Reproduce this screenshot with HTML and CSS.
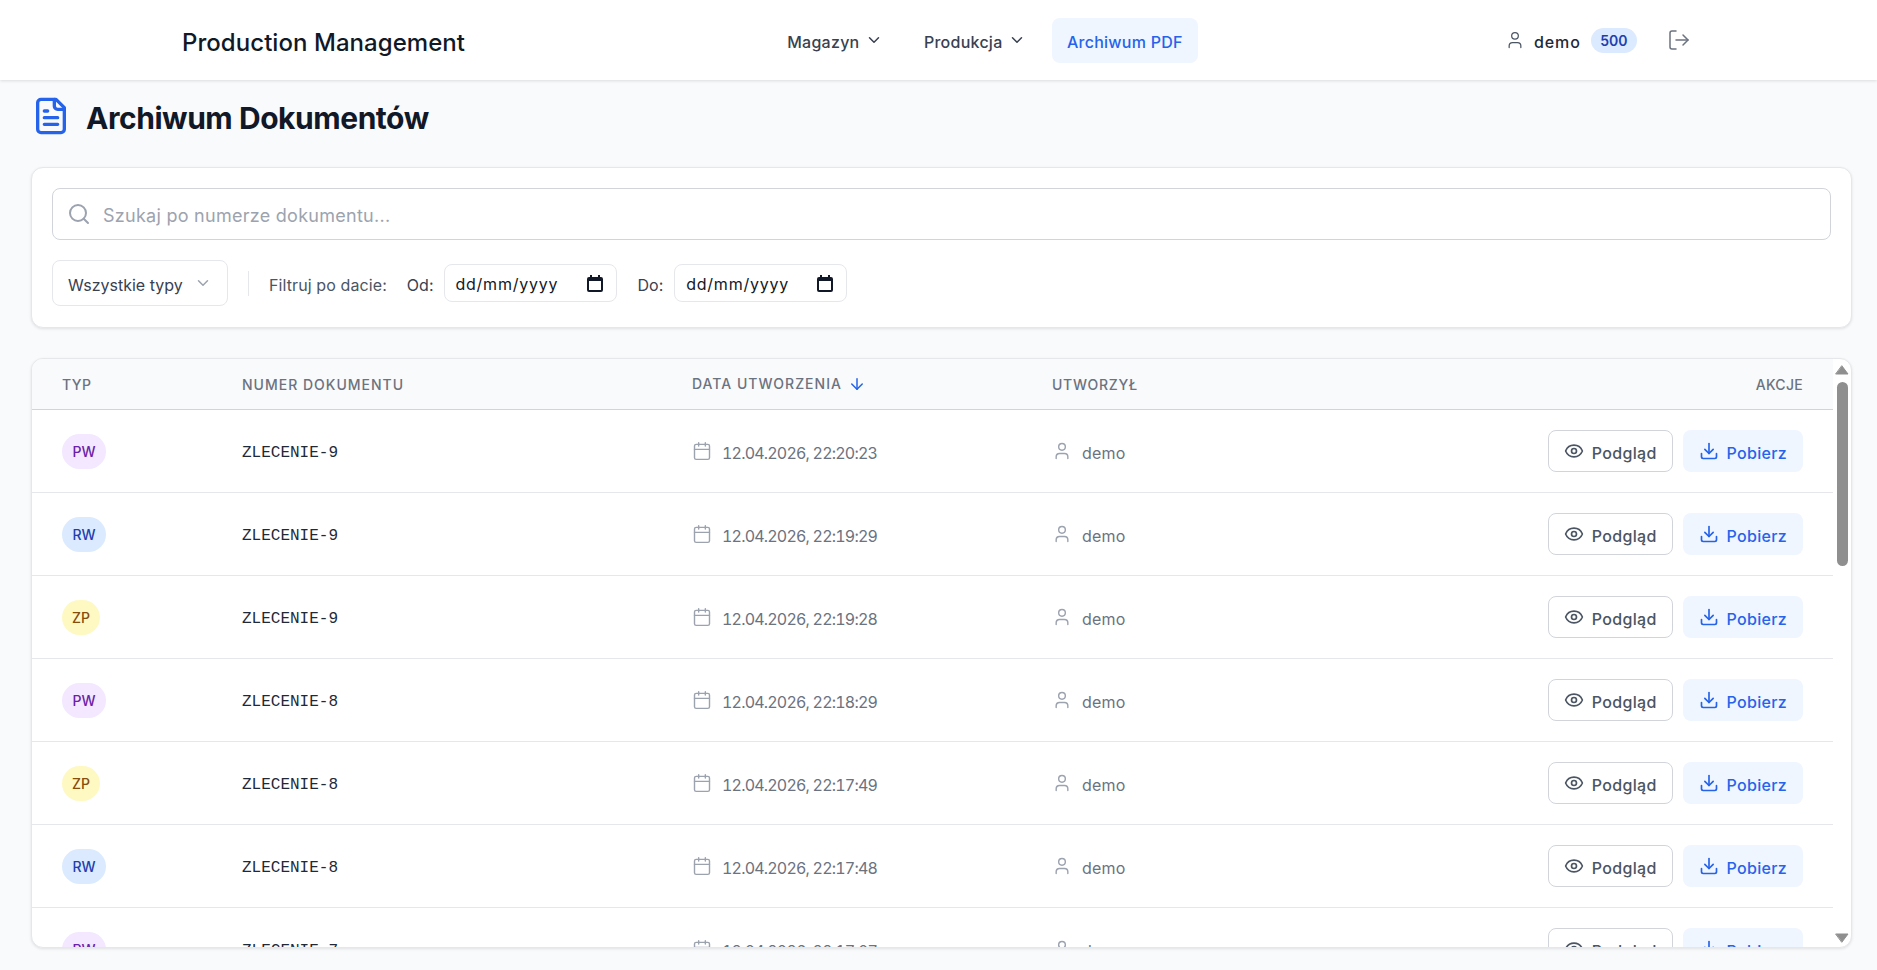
FILE: index.html
```html
<!DOCTYPE html>
<html lang="pl">
<head>
    <meta charset="UTF-8">
    <meta name="viewport" content="width=device-width, initial-scale=1.0">
    <title>Archiwum Dokumentów - Production Management</title>
    <link rel="stylesheet" href="styles.css">
</head>
<body>
    <!-- shared icons -->
    <svg class="icon-defs" xmlns="http://www.w3.org/2000/svg">
        <symbol id="i-chevron" viewBox="0 0 24 24"><path d="m6 9 6 6 6-6"/></symbol>
        <symbol id="i-user" viewBox="0 0 24 24"><path d="M19 21v-2a4 4 0 0 0-4-4H9a4 4 0 0 0-4 4v2"/><circle cx="12" cy="7" r="4"/></symbol>
        <symbol id="i-calendar" viewBox="0 0 24 24"><path d="M8 2v4M16 2v4"/><rect x="3" y="4" width="18" height="18" rx="2"/><path d="M3 10h18"/></symbol>
        <symbol id="i-eye" viewBox="0 0 24 24"><path d="M2.06 12.35a1 1 0 0 1 0-.7 10.75 10.75 0 0 1 19.88 0 1 1 0 0 1 0 .7 10.75 10.75 0 0 1-19.88 0"/><circle cx="12" cy="12" r="3"/></symbol>
        <symbol id="i-download" viewBox="0 0 24 24"><path d="M21 15v4a2 2 0 0 1-2 2H5a2 2 0 0 1-2-2v-4"/><path d="m7 10 5 5 5-5"/><path d="M12 15V3"/></symbol>
        <symbol id="i-picker" viewBox="0 0 16 17"><path class="picker-fill" d="M3 0h2v2h6V0h2v2h1a2 2 0 0 1 2 2v11a2 2 0 0 1-2 2H2a2 2 0 0 1-2-2V4a2 2 0 0 1 2-2h1Zm-1 6v9h12V6Z"/></symbol>
    </svg>

    <header class="topbar">
        <div class="brand"><span class="brand-text">Production Management</span></div>
        <nav class="nav">
            <a class="nav-item" href="#"><span class="txt">Magazyn</span> <svg class="icon-16"><use href="#i-chevron"/></svg></a>
            <a class="nav-item" href="#"><span class="txt">Produkcja</span> <svg class="icon-16"><use href="#i-chevron"/></svg></a>
            <a class="nav-item active" href="#"><span class="txt">Archiwum PDF</span></a>
        </nav>
        <div class="account">
            <svg class="icon-20 thin"><use href="#i-user"/></svg>
            <span class="account-name txt">demo</span>
            <span class="account-badge">500</span>
            <a class="logout" href="#" aria-label="Wyloguj">
                <svg viewBox="0 0 24 24"><path d="M9 21H5a2 2 0 0 1-2-2V5a2 2 0 0 1 2-2h4"/><path d="m16 17 5-5-5-5"/><path d="M21 12H9"/></svg>
            </a>
        </div>
    </header>

    <main class="page">
        <div class="page-title">
            <svg viewBox="0 0 24 24"><path d="M15 2H6a2 2 0 0 0-2 2v16a2 2 0 0 0 2 2h12a2 2 0 0 0 2-2V7Z"/><path d="M14 2v4a2 2 0 0 0 2 2h4"/><path d="M10 9H8M16 13H8M16 17H8"/></svg>
            <h1>Archiwum Dokumentów</h1>
        </div>

        <section class="card filters">
            <label class="search">
                <svg viewBox="0 0 24 24"><circle cx="11" cy="11" r="8"/><path d="m21 21-4.300-4.300"/></svg>
                <input type="text" placeholder="Szukaj po numerze dokumentu...">
            </label>
            <div class="filter-row">
                <div class="select"><span class="txt">Wszystkie typy</span> <svg class="icon-16"><use href="#i-chevron"/></svg></div>
                <span class="divider"></span>
                <span class="filter-label txt">Filtruj po dacie:</span>
                <label class="date-field"><span class="txt">Od:</span>
                    <span class="date-box"><input type="text" placeholder="dd/mm/yyyy"><svg class="picker"><use href="#i-picker"/></svg></span>
                </label>
                <label class="date-field"><span class="txt">Do:</span>
                    <span class="date-box"><input type="text" placeholder="dd/mm/yyyy"><svg class="picker"><use href="#i-picker"/></svg></span>
                </label>
            </div>
        </section>

        <section class="card table-card">
            <div class="table-scroll">
                <table class="docs">
                    <thead>
                        <tr>
                            <th class="col-type">Typ</th>
                            <th class="col-number">Numer dokumentu</th>
                            <th class="col-date">Data utworzenia <svg class="sort-arrow" viewBox="0 0 24 24"><path d="M12 5v14"/><path d="m19 12-7 7-7-7"/></svg></th>
                            <th class="col-user">Utworzył</th>
                            <th class="col-actions">Akcje</th>
                        </tr>
                    </thead>
                    <tbody>
                        <tr>
                            <td><span class="pill pw">PW</span></td><td class="number">ZLECENIE-9</td>
                            <td><span class="meta"><svg class="icon-20"><use href="#i-calendar"/></svg><span class="txt date">12.04.2026, 22:20:23</span></span></td>
                            <td><span class="meta"><svg class="icon-20"><use href="#i-user"/></svg><span class="txt author">demo</span></span></td>
                            <td class="actions"><a class="btn btn-view" href="#"><svg class="icon-20"><use href="#i-eye"/></svg><span class="txt">Podgląd</span></a><a class="btn btn-get" href="#"><svg class="icon-20"><use href="#i-download"/></svg><span class="txt">Pobierz</span></a></td>
                        </tr>
                        <tr>
                            <td><span class="pill rw">RW</span></td><td class="number">ZLECENIE-9</td>
                            <td><span class="meta"><svg class="icon-20"><use href="#i-calendar"/></svg><span class="txt date">12.04.2026, 22:19:29</span></span></td>
                            <td><span class="meta"><svg class="icon-20"><use href="#i-user"/></svg><span class="txt author">demo</span></span></td>
                            <td class="actions"><a class="btn btn-view" href="#"><svg class="icon-20"><use href="#i-eye"/></svg><span class="txt">Podgląd</span></a><a class="btn btn-get" href="#"><svg class="icon-20"><use href="#i-download"/></svg><span class="txt">Pobierz</span></a></td>
                        </tr>
                        <tr>
                            <td><span class="pill zp">ZP</span></td><td class="number">ZLECENIE-9</td>
                            <td><span class="meta"><svg class="icon-20"><use href="#i-calendar"/></svg><span class="txt date">12.04.2026, 22:19:28</span></span></td>
                            <td><span class="meta"><svg class="icon-20"><use href="#i-user"/></svg><span class="txt author">demo</span></span></td>
                            <td class="actions"><a class="btn btn-view" href="#"><svg class="icon-20"><use href="#i-eye"/></svg><span class="txt">Podgląd</span></a><a class="btn btn-get" href="#"><svg class="icon-20"><use href="#i-download"/></svg><span class="txt">Pobierz</span></a></td>
                        </tr>
                        <tr>
                            <td><span class="pill pw">PW</span></td><td class="number">ZLECENIE-8</td>
                            <td><span class="meta"><svg class="icon-20"><use href="#i-calendar"/></svg><span class="txt date">12.04.2026, 22:18:29</span></span></td>
                            <td><span class="meta"><svg class="icon-20"><use href="#i-user"/></svg><span class="txt author">demo</span></span></td>
                            <td class="actions"><a class="btn btn-view" href="#"><svg class="icon-20"><use href="#i-eye"/></svg><span class="txt">Podgląd</span></a><a class="btn btn-get" href="#"><svg class="icon-20"><use href="#i-download"/></svg><span class="txt">Pobierz</span></a></td>
                        </tr>
                        <tr>
                            <td><span class="pill zp">ZP</span></td><td class="number">ZLECENIE-8</td>
                            <td><span class="meta"><svg class="icon-20"><use href="#i-calendar"/></svg><span class="txt date">12.04.2026, 22:17:49</span></span></td>
                            <td><span class="meta"><svg class="icon-20"><use href="#i-user"/></svg><span class="txt author">demo</span></span></td>
                            <td class="actions"><a class="btn btn-view" href="#"><svg class="icon-20"><use href="#i-eye"/></svg><span class="txt">Podgląd</span></a><a class="btn btn-get" href="#"><svg class="icon-20"><use href="#i-download"/></svg><span class="txt">Pobierz</span></a></td>
                        </tr>
                        <tr>
                            <td><span class="pill rw">RW</span></td><td class="number">ZLECENIE-8</td>
                            <td><span class="meta"><svg class="icon-20"><use href="#i-calendar"/></svg><span class="txt date">12.04.2026, 22:17:48</span></span></td>
                            <td><span class="meta"><svg class="icon-20"><use href="#i-user"/></svg><span class="txt author">demo</span></span></td>
                            <td class="actions"><a class="btn btn-view" href="#"><svg class="icon-20"><use href="#i-eye"/></svg><span class="txt">Podgląd</span></a><a class="btn btn-get" href="#"><svg class="icon-20"><use href="#i-download"/></svg><span class="txt">Pobierz</span></a></td>
                        </tr>
                        <tr>
                            <td><span class="pill pw">PW</span></td><td class="number">ZLECENIE-7</td>
                            <td><span class="meta"><svg class="icon-20"><use href="#i-calendar"/></svg><span class="txt date">12.04.2026, 22:17:07</span></span></td>
                            <td><span class="meta"><svg class="icon-20"><use href="#i-user"/></svg><span class="txt author">demo</span></span></td>
                            <td class="actions"><a class="btn btn-view" href="#"><svg class="icon-20"><use href="#i-eye"/></svg><span class="txt">Podgląd</span></a><a class="btn btn-get" href="#"><svg class="icon-20"><use href="#i-download"/></svg><span class="txt">Pobierz</span></a></td>
                        </tr>
                    </tbody>
                </table>
            </div>
            <!-- scrollbar of the table area -->
            <div class="scrollbar">
                <svg class="scroll-arrow" viewBox="0 0 14 10"><path d="M7 1l6 8H1z"/></svg>
                <div class="scroll-thumb"></div>
                <svg class="scroll-arrow bottom" viewBox="0 0 14 10"><path d="M7 9l6-8H1z"/></svg>
            </div>
        </section>
    </main>
</body>
</html>
```

FILE: styles.css
```css
* {
    box-sizing: border-box;
}
html, body {
    height: 100%;
}
body {
    margin: 0;
    display: flex;
    flex-direction: column;
    overflow: hidden;
    font-family: 'Inter', 'Liberation Sans', sans-serif;
    font-size: 16px;
    color: #111827;
    background-color: #f9fafb;
}
a {
    text-decoration: none;
    color: inherit;
}
svg {
    fill: none;
    stroke: currentColor;
    stroke-width: 2;
    stroke-linecap: round;
    stroke-linejoin: round;
    flex-shrink: 0;
}
.icon-defs {
    display: none;
}
.icon-16 {
    width: 18px;
    height: 18px;
}
.icon-20 {
    width: 20px;
    height: 20px;
    stroke-width: 1.7;
}
/* text sits a little under the middle of its row */
.txt {
    padding-top: 3px;
}

/* top bar */
.topbar {
    flex: 0 0 80px;
    display: flex;
    align-items: center;
    justify-content: space-between;
    padding: 0 186px 0 182px;
    background-color: #fff;
    box-shadow: 0 1px 3px rgba(0, 0, 0, 0.12);
    position: relative;
}
.brand {
    display: flex;
    font-size: 24px;
    font-weight: 500;
    letter-spacing: 0.05px;
    color: #111827;
}
.brand-text {
    padding-top: 5px;
}
.nav {
    display: flex;
    gap: 10.5px;
}
.nav-item {
    display: flex;
    align-items: center;
    gap: 6px;
    height: 45px;
    padding: 0 15px;
    border-radius: 8px;
    font-weight: 500;
    letter-spacing: 0.25px;
    color: #374151;
}
.nav-item.active {
    background-color: #eff6ff;
    color: #2563eb;
}
.account {
    display: flex;
    align-items: center;
    color: #4b5563;
}
.thin {
    stroke-width: 1.5;
}
.account-name {
    margin-left: 9px;
    font-weight: 500;
    letter-spacing: 0.9px;
    color: #1f2937;
}
.account-badge {
    margin-left: 10px;
    padding: 0 9.5px;
    line-height: 25px;
    border-radius: 13px;
    font-size: 14px;
    font-weight: 600;
    color: #1e40af;
    background-color: #dbeafe;
}
.logout {
    display: flex;
    margin-left: 30px;
    color: #6b7280;
}
.logout svg {
    width: 24px;
    height: 24px;
    stroke-width: 1.5;
}

/* page */
.page {
    flex: 1;
    min-height: 0;
    display: flex;
    flex-direction: column;
    padding: 16px 25px 22px 31px;
}
.page-title {
    display: flex;
    align-items: center;
    gap: 15px;
    margin-bottom: 31px;
}
.page-title svg {
    width: 40px;
    height: 40px;
    color: #2563eb;
}
.page-title h1 {
    margin: 0;
    padding-top: 4px;
    font-size: 30px;
    font-weight: 700;
    letter-spacing: -0.45px;
    color: #111827;
}
.card {
    background-color: #fff;
    border: 1px solid #e5e7eb;
    border-radius: 12px;
    box-shadow: 0 1px 3px rgba(0, 0, 0, 0.1);
}

/* filters */
.filters {
    padding: 20px 20px 21px;
    margin-bottom: 30px;
}
.search {
    display: flex;
    align-items: center;
    gap: 12px;
    height: 52px;
    padding: 0 14px;
    border: 1px solid #d1d5db;
    border-radius: 8px;
    color: #9ca3af;
}
.search svg {
    width: 24px;
    height: 24px;
}
.search input {
    flex: 1;
    border: none;
    outline: none;
    padding: 2px 0 0;
    font-family: inherit;
    font-size: 18px;
    letter-spacing: 0.27px;
    color: #111827;
}
.search input::placeholder {
    color: #9ca3af;
}
.filter-row {
    display: flex;
    align-items: center;
    margin-top: 20px;
}
.select {
    display: flex;
    align-items: center;
    justify-content: space-between;
    width: 176px;
    height: 46px;
    padding: 0 15px;
    border: 1px solid #e5e7eb;
    border-radius: 8px;
    color: #374151;
}
.select svg {
    color: #9ca3af;
}
.divider {
    width: 1px;
    height: 25px;
    margin: 0 20px;
    background-color: #e5e7eb;
}
.filter-label {
    letter-spacing: 0.1px;
    color: #4b5563;
}
.date-field {
    display: flex;
    align-items: center;
    gap: 10px;
    margin-left: 20px;
    color: #374151;
}
.date-field + .date-field {
    gap: 11px;
    margin-left: 21px;
}
.date-box {
    display: flex;
    align-items: center;
    width: 173px;
    height: 38px;
    padding: 0 13px 0 11px;
    border: 1px solid #e5e7eb;
    border-radius: 8px;
    background-color: #fff;
}
.date-box input {
    flex: 1;
    min-width: 0;
    border: none;
    outline: none;
    padding: 1px 0 0;
    font-family: inherit;
    font-size: 16px;
    letter-spacing: 0.75px;
}
.date-box input::placeholder {
    color: #111827;
    opacity: 1;
}
.picker {
    width: 16px;
    height: 17px;
}
.picker-fill {
    fill: #111827;
    stroke: none;
    fill-rule: evenodd;
}

/* table */
.table-card {
    flex: 1;
    min-height: 0;
    display: flex;
    overflow: hidden;
}
.table-scroll {
    flex: 1;
    min-width: 0;
    overflow: hidden;
}
.scrollbar {
    flex: 0 0 18px;
    display: flex;
    flex-direction: column;
    align-items: center;
    padding: 6px 0 4px;
}
.scroll-arrow {
    width: 14px;
    height: 10px;
    fill: #8f8f8f;
    stroke: #8f8f8f;
    stroke-width: 1;
}
.scroll-arrow.bottom {
    margin-top: auto;
}
.scroll-thumb {
    width: 11px;
    height: 184px;
    margin-top: 7px;
    border-radius: 6px;
    background-color: #8f8f8f;
}
.docs {
    width: 100%;
    table-layout: fixed;
    border-collapse: separate;
    border-spacing: 0;
}
.docs th {
    height: 51px;
    padding: 0 30px;
    text-align: left;
    font-size: 14px;
    font-weight: 500;
    letter-spacing: 1px;
    text-transform: uppercase;
    color: #6b7280;
    background-color: #f9fafb;
    border-bottom: 1px solid #d1d5db;
}
.col-type { width: 180px; }
.col-number { width: 450px; }
.col-date { width: 360px; }
.col-user { width: 400px; }
.docs th.col-type {
    letter-spacing: 0.4px;
}
.docs th.col-user {
    letter-spacing: 0.7px;
}
.docs th.col-actions {
    text-align: right;
    letter-spacing: 0.3px;
}
.sort-arrow {
    width: 18px;
    height: 18px;
    margin-left: 1px;
    vertical-align: -4px;
    color: #2563eb;
}
.docs td {
    height: 83px;
    padding: 0 30px;
    border-bottom: 1px solid #e5e7eb;
    color: #6b7280;
}
.pill {
    display: inline-block;
    padding: 0 10px;
    line-height: 35px;
    border-radius: 18px;
    font-size: 14px;
    font-weight: 500;
    vertical-align: middle;
}
.pill.pw { padding: 0 10.5px; background-color: #f3e8ff; color: #6b21a8; }
.pill.rw { padding: 0 10.5px; background-color: #dbeafe; color: #1e40af; }
.pill.zp { background-color: #fef9c3; color: #854d0e; }
.docs td.number {
    padding-top: 4px;
    font-family: 'Liberation Mono', monospace;
    font-size: 16px;
    color: #1f2937;
}
.meta {
    display: flex;
    align-items: center;
    gap: 10px;
}
.meta svg {
    color: #9ca3af;
}
.date {
    font-variant-numeric: tabular-nums;
    letter-spacing: -0.8px;
}
.author {
    letter-spacing: 0.2px;
}
.actions {
    white-space: nowrap;
    text-align: right;
}
.btn {
    display: inline-flex;
    align-items: center;
    gap: 7.5px;
    height: 42px;
    border-radius: 8px;
    font-weight: 500;
    letter-spacing: 0.3px;
    vertical-align: middle;
}
.btn svg {
    stroke-width: 2;
}
.btn-view {
    padding: 0 15.5px;
    border: 1px solid #d1d5db;
    color: #4b5563;
    background-color: #fff;
}
.btn-get {
    margin-left: 10px;
    padding: 0 16px;
    color: #2563eb;
    background-color: #eff6ff;
}
```
